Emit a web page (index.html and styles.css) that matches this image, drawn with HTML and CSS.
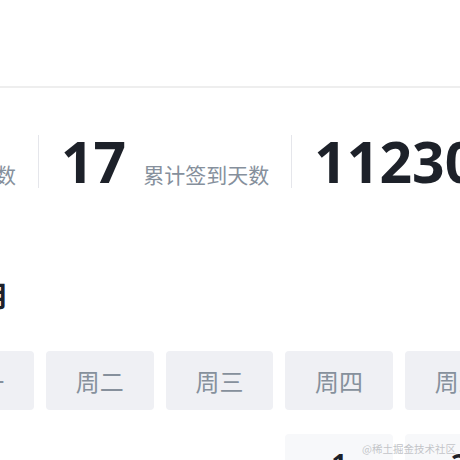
FILE: index.html
```html
<!DOCTYPE html>
<html lang="zh-CN">
<head>
<meta charset="utf-8">
<title>签到</title>
<link rel="stylesheet" href="styles.css">
</head>
<body>
<div class="page">
  <div class="topbar"></div>
  <div class="stats">
    <div class="stat stat-first">
      <span class="num">3</span>
      <span class="label">连续签到天数</span>
    </div>
    <div class="sep"></div>
    <div class="stat">
      <span class="num">17</span>
      <span class="label">累计签到天数</span>
    </div>
    <div class="sep"></div>
    <div class="stat">
      <span class="num">112300</span>
      <span class="label">当前矿石数</span>
    </div>
  </div>
  <div class="title-row">
    <h2 class="title">签到日历 · 一月</h2>
  </div>
  <div class="calendar">
    <div class="wd">周一</div>
    <div class="wd">周二</div>
    <div class="wd">周三</div>
    <div class="wd">周四</div>
    <div class="wd">周五</div>
    <div class="wd">周六</div>
    <div class="wd">周日</div>
    <div class="day empty"></div>
    <div class="day empty"></div>
    <div class="day empty"></div>
    <div class="day"><span class="dnum">1</span></div>
    <div class="day"><span class="dnum">2</span></div>
    <div class="day"><span class="dnum">3</span></div>
    <div class="day"><span class="dnum">4</span></div>
  </div>
</div>
<div class="watermark">@稀土掘金技术社区</div>
</body>
</html>
```
FILE: styles.css
```css
html, body {
  margin: 0;
  padding: 0;
}
body {
  width: 460px;
  height: 460px;
  overflow: hidden;
  background: #ffffff;
  font-family: "Noto Sans", "Noto Sans CJK SC", sans-serif;
  position: relative;
}
.page {
  width: 460px;
}
.topbar {
  height: 86px;
  border-bottom: 2px solid #eeeeee;
}
.stats {
  display: flex;
  align-items: center;
  margin-top: 45px;
  white-space: nowrap;
}
.stat {
  display: flex;
  align-items: baseline;
  gap: 17px;
  flex: none;
}
.stat-first {
  width: 316px;
  margin-left: -300px;
  justify-content: flex-end;
}
.num {
  font-family: "Noto Sans", sans-serif;
  font-weight: 700;
  font-size: 57px;
  line-height: 57px;
  color: #1d2129;
}
.label {
  font-family: "Noto Sans CJK SC", sans-serif;
  font-size: 21px;
  color: #86909c;
}
.sep {
  flex: none;
  width: 1px;
  height: 53px;
  background: #e5e6eb;
  margin: 0 22px 0 22px;
}
.title-row {
  margin-top: 85px;
  display: flex;
  justify-content: flex-end;
  width: 9px;
}
.title {
  margin: 0;
  flex: none;
  font-family: "Noto Sans CJK SC", sans-serif;
  font-size: 28px;
  line-height: 40px;
  font-weight: 700;
  color: #1d2129;
  white-space: nowrap;
}
.calendar {
  margin-top: 36px;
  margin-left: -73.7px;
  display: grid;
  grid-template-columns: repeat(7, 107.67px);
  column-gap: 12px;
  row-gap: 24px;
}
.wd {
  height: 59px;
  border-radius: 4px;
  background: #eff0f4;
  color: #86909c;
  font-family: "Noto Sans CJK SC", sans-serif;
  font-size: 24px;
  display: flex;
  align-items: center;
  justify-content: center;
}
.day {
  height: 96px;
  border-radius: 4px;
  background: #f7f8fa;
  display: flex;
  justify-content: center;
  padding-top: 10px;
  box-sizing: border-box;
}
.day.empty {
  background: transparent;
}
.dnum {
  font-family: "Noto Sans", sans-serif;
  font-weight: 700;
  font-size: 27px;
  line-height: 38px;
  color: #1d2129;
}
.watermark {
  position: absolute;
  right: 4px;
  bottom: 4px;
  font-family: "Noto Sans CJK SC", sans-serif;
  font-size: 10.5px;
  line-height: 14px;
  color: #c2c4c8;
  text-shadow: 0 0 1px #ffffff;
}
```
